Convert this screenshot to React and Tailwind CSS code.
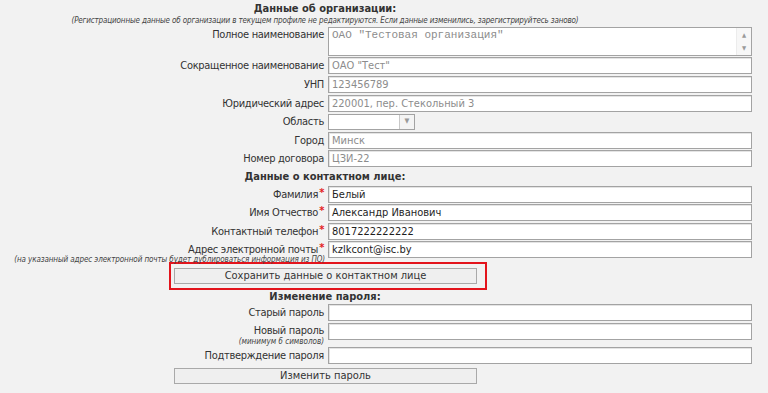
import React from "react";

const inputBox = "h-[17px] w-[424px] border border-[#a3a3a3] bg-white pl-[3px] text-[11px] leading-[15px] shadow-[inset_1px_1px_0_#e4e4e4]";

function Label({ text, req }) {
  return (
    <span className="tracking-[-0.3px]">
      {text}
      {req && <span className="relative -top-[2px] ml-[1px] font-bold text-[#e32020]">*</span>}
    </span>
  );
}

function Row({ label, req, value, muted, mt }) {
  return (
    <div className={`flex items-center ${mt}`}>
      <div className="w-[328px] pr-[4px] text-right leading-[17px]">
        <Label text={label} req={req} />
      </div>
      <div className={`${inputBox} ${muted ? "text-[#8c8c8c]" : "text-[#1e1e1e]"}`}>{value}</div>
    </div>
  );
}

function Heading({ children, className }) {
  return (
    <div className={`w-[650px] text-center font-bold text-[11px] ${className}`}>{children}</div>
  );
}

export default function App() {
  return (
    <div className="min-h-screen bg-[#f2f2f2] font-['DejaVu_Sans_Condensed','DejaVu_Sans',sans-serif] text-[11px] text-[#333]">
      <div className="w-[768px] pt-[2px]">
        <Heading className="leading-[14px]">Данные об организации:</Heading>
        <div className="w-[650px] text-center text-[8px] italic leading-[10px] tracking-[-0.15px] text-[#444]">
          (Регистрационные данные об организации в текущем профиле не редактируются. Если данные изменились, зарегистрируйтесь заново)
        </div>

        <div className="mt-[1px] flex items-start">
          <div className="w-[328px] pr-[4px] pt-[1px] text-right leading-[14px] tracking-[-0.3px]">Полное наименование</div>
          <div className="flex h-[29px] w-[424px] border border-[#a3a3a3] bg-white">
            <div className="flex-1 pl-[3px] pt-[1px] font-['Liberation_Mono',monospace] text-[11px] leading-[13px] text-[#8c8c8c]">
              ОАО "Тестовая организация"
            </div>
            <div className="flex w-[15px] flex-col items-center justify-between border-l border-[#ececec] bg-[#f7f7f7] py-[3px] text-[6px] leading-[8px] text-[#9a9a9a]">
              <span>▲</span>
              <span>▼</span>
            </div>
          </div>
        </div>

        <Row mt="mt-[1px]" label="Сокращенное наименование" value='ОАО "Тест"' muted />
        <Row mt="mt-[2px]" label="УНП" value="123456789" muted />
        <Row mt="mt-[2px]" label="Юридический адрес" value="220001, пер. Стекольный 3" muted />

        <div className="mt-[1px] flex items-center">
          <div className="w-[328px] pr-[4px] text-right leading-[17px] tracking-[-0.3px]">Область</div>
          <div className="flex h-[16px] w-[87px] border border-[#a3a3a3] bg-white">
            <div className="flex-1" />
            <div className="flex w-[15px] items-center justify-center border-l border-[#c8c8c8] bg-[#f4f4f4] text-[7px] text-[#999]">▼</div>
          </div>
        </div>

        <Row mt="mt-[2px]" label="Город" value="Минск" muted />
        <Row mt="mt-[1px]" label="Номер договора" value="ЦЗИ-22" muted />

        <Heading className="mt-[3px] leading-[14px]">Данные о контактном лице:</Heading>
        <Row mt="mt-[2px]" label="Фамилия" req value="Белый" />
        <Row mt="mt-[1px]" label="Имя Отчество" req value="Александр Иванович" />
        <Row mt="mt-[2px]" label="Контактный телефон" req value="8017222222222" />
        <Row mt="mt-[1px]" label="Адрес электронной почты" req value="kzlkcont@isc.by" />
        <div className="-mt-[2px] h-[6px] w-[325px] whitespace-nowrap text-right text-[8px] italic leading-[8px] tracking-[-0.1px] text-[#444]">
          (на указанный адрес электронной почты будет дублироваться информация из ПО)
        </div>

        <div className="ml-[169px] w-[318px] border-2 border-[#e3141c] pb-[4px] pl-[3px] pt-[4px]">
          <button className="block h-[16px] w-[303px] border border-[#a9a9a9] bg-[#efefef] text-center text-[11px] leading-[14px] text-[#333]">
            Сохранить данные о контактном лице
          </button>
        </div>

        <Heading className="leading-[13px]">Изменение пароля:</Heading>
        <Row mt="mt-[1px]" label="Старый пароль" value="" />
        <div className="mt-[2px] flex items-start">
          <div className="w-[328px] pr-[4px] text-right">
            <div className="pt-[1px] leading-[14px] tracking-[-0.3px]">Новый пароль</div>
            <div className="text-[8px] italic leading-[8px] text-[#444]">(минимум 6 символов)</div>
          </div>
          <div className={inputBox} />
        </div>
        <Row mt="mt-[1px]" label="Подтверждение пароля" value="" />

        <button className="ml-[174px] mt-[4px] block h-[16px] w-[303px] border border-[#a9a9a9] bg-[#efefef] text-center text-[11px] leading-[14px] text-[#333]">
          Изменить пароль
        </button>
      </div>
    </div>
  );
}
